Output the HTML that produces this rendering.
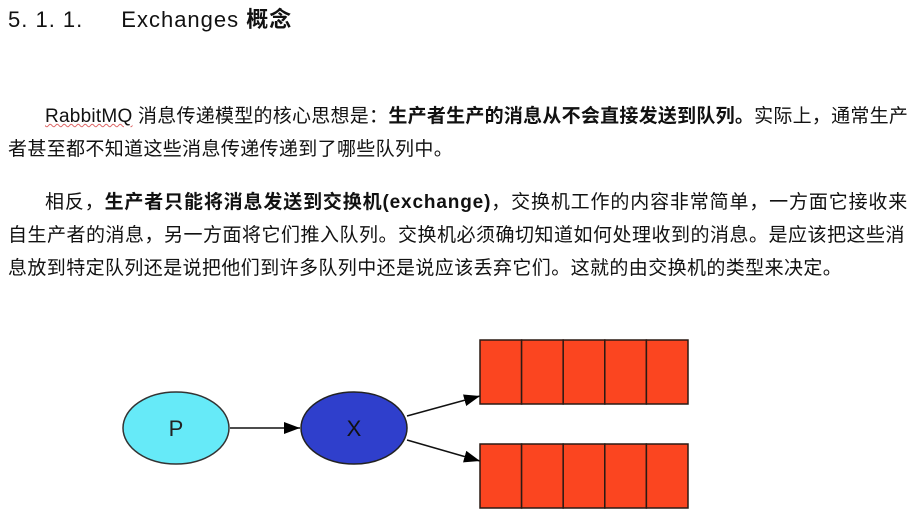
<!DOCTYPE html>
<html><head><meta charset="utf-8"><style>
body{margin:0;width:912px;height:530px;background:#fff;position:relative;overflow:hidden;font-family:"Liberation Sans","Noto Sans CJK SC",sans-serif;color:#111}
.l{position:absolute;white-space:nowrap;font-size:19px;line-height:24px}
b{font-weight:bold}
</style></head><body>
<div class="l" style="left:8px;top:8px;font-size:22px;letter-spacing:1px">5. 1. 1.<span style="display:inline-block;width:38px"></span>Exchanges <b>概念</b></div>
<div class="l" style="left:45px;top:105px;letter-spacing:0.25px"><span style="text-decoration:underline wavy #d66;text-decoration-thickness:1px">RabbitMQ</span> 消息传递模型的核心思想是：<b>生产者生产的消息从不会直接发送到队列。</b>实际上，通常生产</div>
<div class="l" style="left:8px;top:138px;letter-spacing:0.35px">者甚至都不知道这些消息传递传递到了哪些队列中。</div>
<div class="l" style="left:45px;top:191px;letter-spacing:0.85px">相反，<b>生产者只能将消息发送到交换机(exchange)</b>，交换机工作的内容非常简单，一方面它接收来</div>
<div class="l" style="left:8px;top:224px;letter-spacing:0.5px">自生产者的消息，另一方面将它们推入队列。交换机必须确切知道如何处理收到的消息。是应该把这些消</div>
<div class="l" style="left:8px;top:257px;letter-spacing:0.4px">息放到特定队列还是说把他们到许多队列中还是说应该丢弃它们。这就的由交换机的类型来决定。</div>
<svg style="position:absolute;left:0;top:0" width="912" height="530">
<defs><marker id="a" markerWidth="16" markerHeight="12" refX="16" refY="6" orient="auto" markerUnits="userSpaceOnUse"><path d="M0,0L16,6L0,12z" fill="#000"/></marker></defs>
<ellipse cx="176" cy="428" rx="53" ry="36" fill="#66eaf8" stroke="#333" stroke-width="1.5"/>
<text x="176" y="436" font-size="22" text-anchor="middle" fill="#222" font-family="Liberation Sans">P</text>
<line x1="230" y1="428" x2="300" y2="428" stroke="#111" stroke-width="1.5" marker-end="url(#a)"/>
<ellipse cx="354" cy="428" rx="53" ry="36" fill="#2f3fcc" stroke="#222" stroke-width="1.5"/>
<text x="354" y="436" font-size="22" text-anchor="middle" fill="#111" font-family="Liberation Sans">X</text>
<line x1="407" y1="416" x2="480" y2="396" stroke="#111" stroke-width="1.5" marker-end="url(#a)"/>
<line x1="407" y1="440" x2="480" y2="461" stroke="#111" stroke-width="1.5" marker-end="url(#a)"/>
<g fill="#fb4520" stroke="#2a1a14" stroke-width="1.5">
<rect x="480" y="340" width="41.6" height="64"/><rect x="521.6" y="340" width="41.6" height="64"/><rect x="563.2" y="340" width="41.6" height="64"/><rect x="604.8" y="340" width="41.6" height="64"/><rect x="646.4" y="340" width="41.6" height="64"/>
<rect x="480" y="444" width="41.6" height="64"/><rect x="521.6" y="444" width="41.6" height="64"/><rect x="563.2" y="444" width="41.6" height="64"/><rect x="604.8" y="444" width="41.6" height="64"/><rect x="646.4" y="444" width="41.6" height="64"/>
</g>
</svg>
</body></html>
